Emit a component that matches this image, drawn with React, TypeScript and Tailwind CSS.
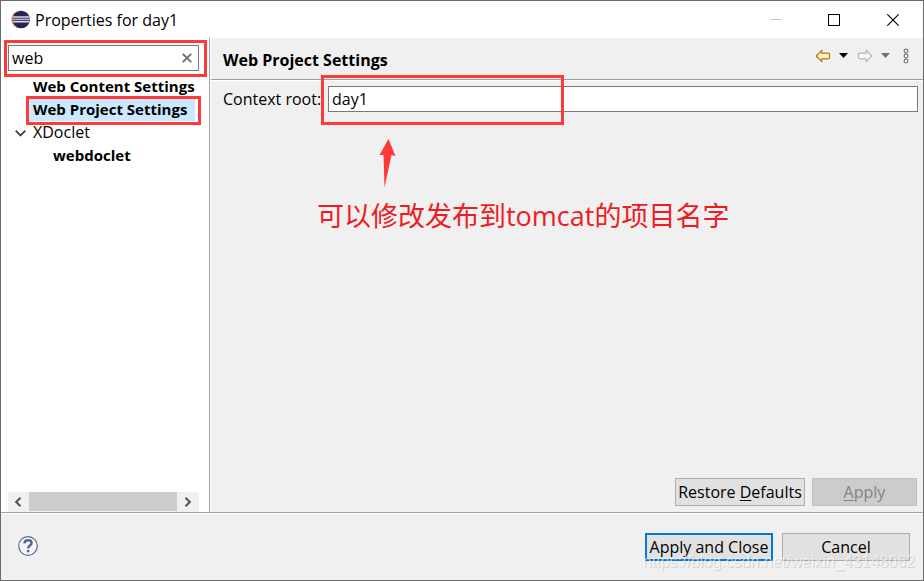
import React from "react";

function EclipseLogo() {
  return (
    <svg width="19" height="20" viewBox="0 0 19 20" aria-hidden="true">
      <circle cx="9" cy="9.500" r="8.700" fill="#f0963c" />
      <circle cx="10.200" cy="9.500" r="8.700" fill="#2c2255" />
      <path d="M2 7h16.200M2 11.800h16.200" stroke="#dcdaea" strokeWidth="1.400" />
      <path d="M1.600 9.400h17.200" stroke="#b9b6d6" strokeWidth="1.600" />
    </svg>
  );
}

function TitleBar() {
  return (
    <header className="flex h-[37px] items-center bg-white pl-2.5">
      <EclipseLogo />
      <h1 className="ml-[5px] flex-1 text-[16px]">Properties for day1</h1>
      <button aria-label="Minimize" disabled className="flex h-full w-[58px] items-center justify-center">
        <svg width="12" height="12" viewBox="0 0 12 12" shapeRendering="crispEdges">
          <path d="M0 5.5h12" stroke="#c8c8c8" />
        </svg>
      </button>
      <button aria-label="Maximize" className="flex h-full w-[58px] items-center justify-center">
        <svg width="12" height="12" viewBox="0 0 12 12" shapeRendering="crispEdges">
          <path d="M.5.5h11v11H.5z" fill="none" stroke="#000" />
        </svg>
      </button>
      <button aria-label="Close" className="flex h-full w-[60px] items-center justify-center">
        <svg width="12" height="12" viewBox="0 0 12 12">
          <path d="M.3.3l11.4 11.4M11.7.3L.3 11.7" stroke="#000" strokeWidth="1.1" />
        </svg>
      </button>
    </header>
  );
}

function Sidebar() {
  return (
    <nav className="flex w-[209px] shrink-0 flex-col border-r border-[#a0a0a0] bg-white pl-[7px]">
      <div className="relative mt-[7px] mr-[10px] flex h-[26px] items-center border border-[#7a7a7a]">
        <input
          aria-label="Filter"
          defaultValue="web"
          className="h-full min-w-0 flex-1 bg-transparent pl-[3px] text-[16px] outline-none"
        />
        <button aria-label="Clear" className="flex h-full w-[22px] items-center justify-center">
          <svg width="10" height="10" viewBox="0 0 10 10">
            <path d="M.8.8l8.4 8.4M9.2.8L.8 9.2" stroke="#6e6e6e" strokeWidth="1.9" />
          </svg>
        </button>
        <span className="pointer-events-none absolute -top-[6px] -right-[9px] -bottom-[7px] -left-[5px] border-[3px] border-[#ff3838]" />
      </div>
      <ul className="mt-1 flex-1 text-[15px] leading-[23px] whitespace-nowrap">
        <li className="pl-[25px] font-bold">Web Content Settings</li>
        <li className="relative ml-[21px] w-[166px] bg-[#cce8ff] pl-1 font-bold">
          Web Project Settings
          <span className="pointer-events-none absolute -top-[2px] -right-[6px] -bottom-1 -left-[3px] border-[3px] border-[#ff3838]" />
        </li>
        <li className="flex items-center pl-[7px] text-[16px]">
          <svg className="mr-[7px]" width="11" height="8" viewBox="0 0 11 8" aria-hidden="true">
            <path d="M.7 1.7l4.8 4.8 4.8-4.800" fill="none" stroke="#404040" strokeWidth="1.800" />
          </svg>
          XDoclet
        </li>
        <li className="pl-[45px] font-bold">webdoclet</li>
      </ul>
      <div className="mr-[10px] flex h-5 bg-[#f0f0f0] pb-px">
        <button aria-label="Scroll left" className="flex w-[21px] items-center justify-center">
          <svg width="9" height="10" viewBox="0 0 9 10">
            <path d="M6.500.8L2.200 5l4.300 4.200" fill="none" stroke="#555" strokeWidth="2.100" />
          </svg>
        </button>
        <div className="flex-1 bg-[#cdcdcd]" />
        <button aria-label="Scroll right" className="flex w-[22px] items-center justify-center">
          <svg width="8" height="10" viewBox="0 0 8 10">
            <path d="M1.5.8L5.8 5 1.5 9.2" fill="none" stroke="#555" strokeWidth="2.1" />
          </svg>
        </button>
      </div>
    </nav>
  );
}

function HistoryTools() {
  return (
    <div className="flex items-center">
      <button aria-label="Back">
        <svg width="16" height="14" viewBox="0 0 16 14">
          <path d="M1.2 7L6.8 1.3v2.9h6.5q1.2 0 1.2 1.2v3.2q0 1.2-1.2 1.2H6.8v2.9z" fill="#fff3c0" stroke="#b8720f" strokeWidth="1.2" strokeLinejoin="round" />
        </svg>
      </button>
      <button aria-label="Back history" className="ml-2">
        <svg width="9" height="5" viewBox="0 0 9 5"><path d="M0 0h9L4.5 5z" fill="#000" /></svg>
      </button>
      <button aria-label="Forward" disabled className="ml-[9px]">
        <svg width="16" height="14" viewBox="0 0 16 14">
          <path d="M14.8 7L9.2 1.3v2.9H2.7Q1.5 4.2 1.5 5.4v3.2q0 1.2 1.2 1.2h6.5v2.9z" fill="#f7f7f7" stroke="#b5b5b5" strokeWidth="1.2" strokeLinejoin="round" />
        </svg>
      </button>
      <button aria-label="Forward history" disabled className="ml-2">
        <svg width="9" height="5" viewBox="0 0 9 5"><path d="M0 0h9L4.5 5z" fill="#6f6f6f" /></svg>
      </button>
      <button aria-label="View menu" className="ml-[13px]">
        <svg width="6" height="16" viewBox="0 0 6 16" fill="#fff" stroke="#777" strokeWidth="1.2">
          <circle cx="3" cy="3" r="1.8" />
          <circle cx="3" cy="8" r="1.8" />
          <circle cx="3" cy="13" r="1.8" />
        </svg>
      </button>
    </div>
  );
}

function SettingsPage() {
  return (
    <main className="ml-px flex min-w-0 flex-1 flex-col bg-[#f0f0f0]">
      <div className="flex h-[42px] items-center justify-between border-b border-[#a0a0a0] pr-[14px] pl-3">
        <h2 className="pt-[2px] text-[16px] font-bold">Web Project Settings</h2>
        <div className="pb-[6px]">
          <HistoryTools />
        </div>
      </div>
      <div className="flex h-8 items-end border-t border-white pr-[5px] pl-3">
        <label htmlFor="context-root" className="w-[105px] text-[16px] leading-[26px] whitespace-nowrap">
          Context root:
        </label>
        <div className="relative flex-1">
          <input
            id="context-root"
            defaultValue="day1"
            className="block h-[26px] w-full border border-[#7a7a7a] bg-white pl-[3px] text-[16px] outline-none"
          />
          <span className="pointer-events-none absolute -top-[11px] -bottom-[13px] -left-[7px] w-[243px] border-[3px] border-[#ff3838]" />
        </div>
      </div>
      <div className="flex-1 pt-[27px] pl-[106px]">
        <svg className="ml-[62px]" width="18" height="49" viewBox="0 0 18 49" aria-hidden="true">
          <path d="M9.500 0l7 17-4-1L5.500 48.500 4.500 16H.500z" fill="#ff3838" />
        </svg>
        <p className="mt-2 text-[27px] leading-[40px] whitespace-nowrap text-[#ed1c24]">可以修改发布到tomcat的项目名字</p>
      </div>
      <div className="flex justify-end gap-[7px] pr-[6px] pb-[6px] text-[16px]">
        <button className="h-7 w-[130px] border border-[#adadad] bg-[#e1e1e1] whitespace-nowrap">
          Restore <u className="underline-offset-2">D</u>efaults
        </button>
        <button disabled className="h-7 w-[105px] border border-[#bfbfbf] bg-[#cccccc] text-[#838383]">
          <u className="underline-offset-2">A</u>pply
        </button>
      </div>
    </main>
  );
}

function Footer() {
  return (
    <footer className="relative flex h-[67px] items-center border-t border-white bg-[#f0f0f0] pr-[13px] pl-[17px] text-[16px]">
      <button aria-label="Help" className="mr-auto pb-[2px]">
        <svg width="20" height="20" viewBox="0 0 20 20">
          <circle cx="10" cy="10" r="9.300" fill="#f6f7fa" stroke="#5b6b8c" strokeWidth="1.200" />
          <path d="M6.400 7.400Q6.600 4.200 10.100 4.200q3.500 0 3.500 2.800 0 1.500-1.800 2.600-1.600 1-1.600 2.900" fill="none" stroke="#52648a" strokeWidth="2.400" />
          <path d="M9 14h2.400v2.300H9z" fill="#52648a" />
        </svg>
      </button>
      <button className="mr-[9px] h-7 w-32 border-2 border-[#0078d7] bg-[#e1e1e1] whitespace-nowrap">Apply and Close</button>
      <button className="h-7 w-32 border border-[#adadad] bg-[#e1e1e1]">Cancel</button>
      <span className="pointer-events-none absolute right-[8px] bottom-[8px] font-['Liberation_Sans',Arial,sans-serif] text-[16px] leading-5 whitespace-nowrap text-white/60 [text-shadow:1px_1px_1px_rgba(0,0,0,0.15)]">
        https://blog.csdn.net/weixin_43148062
      </span>
    </footer>
  );
}

export default function App() {
  return (
    <div className="flex min-h-screen flex-col border border-[#6b6b6b] bg-white font-['Open_Sans','Noto_Sans_CJK_SC',sans-serif] text-black">
      <TitleBar />
      <div className="flex flex-1 border-b border-[#a0a0a0]">
        <Sidebar />
        <SettingsPage />
      </div>
      <Footer />
    </div>
  );
}
